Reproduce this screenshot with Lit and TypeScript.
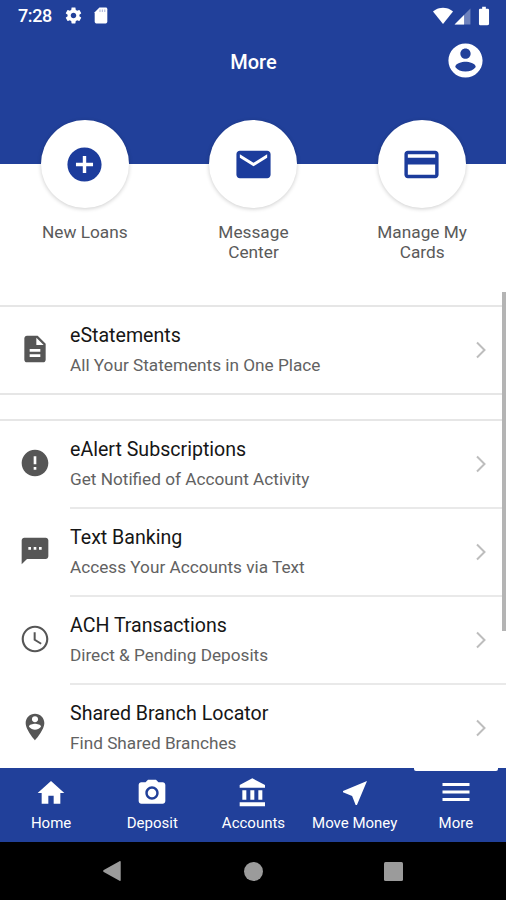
import { LitElement, html, css, svg } from "lit";
import { customElement, property } from "lit/decorators.js";

const ICONS: Record<string, unknown> = {
  gear: svg`<path d="M19.43 12.98c.04-.32.07-.64.07-.98s-.03-.66-.07-.98l2.11-1.65c.19-.15.24-.42.12-.64l-2-3.46c-.12-.22-.39-.3-.61-.22l-2.49 1c-.52-.4-1.08-.73-1.69-.98l-.38-2.65C14.46 2.18 14.25 2 14 2h-4c-.25 0-.46.18-.49.42l-.38 2.65c-.61.25-1.17.59-1.69.98l-2.49-1c-.23-.09-.49 0-.61.22l-2 3.46c-.13.22-.07.49.12.64l2.11 1.65c-.04.32-.07.65-.07.98s.03.66.07.98l-2.11 1.65c-.19.15-.24.42-.12.64l2 3.46c.12.22.39.3.61.22l2.49-1c.52.4 1.08.73 1.69.98l.38 2.65c.03.24.24.42.49.42h4c.25 0 .46-.18.49-.42l.38-2.65c.61-.25 1.17-.59 1.69-.98l2.49 1c.23.09.49 0 .61-.22l2-3.46c.12-.22.07-.49-.12-.64l-2.11-1.65zM12 15.5c-1.93 0-3.5-1.57-3.5-3.5s1.57-3.5 3.5-3.5 3.5 1.57 3.5 3.5-1.57 3.5-3.5 3.5z"/>`,
  sd: svg`<path d="M18 2h-8L4.02 8 4 20c0 1.1.9 2 2 2h12c1.100 0 2-.9 2-2V4c0-1.100-.9-2-2-2z"/><path d="M10 4.500h1.500v3H10zm3 0h1.500v3H13zm3 0h1.500v3H16z" opacity=".35" fill="#21409a"/>`,
  wifi: svg`<path d="M12 21.500L24 6.500C23.500 6 19 2 12 2S.5 6 0 6.500z"/>`,
  signal: svg`<path fill-opacity=".35" d="M2 22h20V2z"/><path d="M14 10L2 22h12z"/>`,
  battery: svg`<path d="M15.670 4H14V2h-4v2H8.330C7.100 4 6.500 4.600 6.500 5.330v15.330C6.500 21.400 7.100 22 8.330 22h7.330c1.240 0 1.840-.6 1.840-1.330V5.330C17.500 4.600 16.900 4 15.670 4z"/>`,
  account: svg`<path d="M12 2C6.480 2 2 6.480 2 12s4.480 10 10 10 10-4.480 10-10S17.520 2 12 2zm0 3c1.660 0 3 1.340 3 3s-1.340 3-3 3-3-1.340-3-3 1.340-3 3-3zm0 13.500c-2.500 0-4.710-1-6-2.720.03-1.990 4-2.980 6-2.980s5.970.99 6 2.980c-1.290 1.720-3.500 2.720-6 2.720z"/>`,
  add: svg`<path d="M12 2C6.480 2 2 6.480 2 12s4.480 10 10 10 10-4.480 10-10S17.520 2 12 2zm5 11h-4v4h-2v-4H7v-2h4V7h2v4h4v2z"/>`,
  mail: svg`<path d="M20 4H4c-1.100 0-1.990.9-1.990 2L2 18c0 1.100.9 2 2 2h16c1.100 0 2-.9 2-2V6c0-1.100-.9-2-2-2zm0 4l-8 5-8-5V6l8 5 8-5v2z"/>`,
  card: svg`<path d="M20 4H4c-1.110 0-1.990.89-1.990 2L2 18c0 1.110.89 2 2 2h16c1.110 0 2-.89 2-2V6c0-1.110-.89-2-2-2zm0 14H4v-6h16v6zm0-10H4V6h16v2z"/>`,
  doc: svg`<path d="M14 2H6c-1.100 0-1.990.9-1.990 2L4 20c0 1.100.89 2 1.990 2H18c1.100 0 2-.9 2-2V8l-6-6zm2 16H8v-2h8v2zm0-4H8v-2h8v2zm-3-5V3.500L18.500 9H13z"/>`,
  alert: svg`<path d="M12 2C6.480 2 2 6.480 2 12s4.480 10 10 10 10-4.480 10-10S17.520 2 12 2zm1 15h-2v-2h2v2zm0-4h-2V7h2v6z"/>`,
  sms: svg`<path d="M20 2H4c-1.100 0-1.990.9-1.990 2L2 22l4-4h14c1.100 0 2-.9 2-2V4c0-1.100-.9-2-2-2zM9 11H7V9h2v2zm4 0h-2V9h2v2zm4 0h-2V9h2v2z"/>`,
  clock: svg`<path d="M11.990 2C6.470 2 2 6.480 2 12s4.470 10 9.990 10C17.520 22 22 17.520 22 12S17.520 2 11.990 2zM12 20.400c-4.640 0-8.400-3.760-8.400-8.400S7.360 3.600 12 3.600s8.400 3.760 8.400 8.400-3.760 8.400-8.400 8.400zm.5-13.400H11v6l5.250 3.150.75-1.230-4.500-2.670z"/>`,
  pin: svg`<path d="M12 2C8.140 2 5 5.140 5 9c0 5.250 7 13 7 13s7-7.750 7-13c0-3.860-3.140-7-7-7zm0 2c1.380 0 2.300 1 2.300 2.200 0 1.210-.92 2.200-2.300 2.200s-2.300-.99-2.300-2.200C9.700 5 10.620 4 12 4zm0 10c-1.670 0-3.240-.75-4.500-2.150.02-1.620 2.870-2.250 4.500-2.250s4.480.63 4.500 2.250c-1.260 1.400-2.830 2.150-4.500 2.150z"/>`,
  chevron: svg`<path d="M8 4.500L15.500 12 8 19.500" fill="none" stroke="currentColor" stroke-width="2"/>`,
  home: svg`<path d="M10 20v-6h4v6h5v-8h3L12 3 2 12h3v8z"/>`,
  camera: svg`<circle cx="12" cy="12" r="3.200"/><path d="M9 2L7.170 4H4c-1.100 0-2 .9-2 2v12c0 1.100.9 2 2 2h16c1.100 0 2-.9 2-2V6c0-1.100-.9-2-2-2h-3.170L15 2H9zm3 15c-2.760 0-5-2.240-5-5s2.240-5 5-5 5 2.240 5 5-2.240 5-5 5z"/>`,
  bank: svg`<path d="M4 10v7h3v-7H4zm6 0v7h3v-7h-3zM2 22h19v-3H2v3zm14-12v7h3v-7h-3zm-4.500-9L2 6v2h19V6l-9.500-5z"/>`,
  send: svg`<path d="M21 3L3 10.530v.98l6.840 2.650L12.480 21h.98L21 3z"/>`,
  menu: svg`<path d="M3 18h18v-2H3v2zm0-5h18v-2H3v2zm0-7v2h18V6H3z"/>`,
  back: svg`<path d="M21.500 2v20c0 .8-.7 1-1.300.6L3 13c-.9-.5-.9-1.500 0-2L20.200 1.400c.6-.4 1.300-.2 1.300.6z"/>`,
};

@customElement("ui-icon")
class UiIcon extends LitElement {
  @property() name = "";
  static styles = css`
    :host { display: block; flex: none; width: 24px; height: 24px; }
    .glyph { display: block; width: 100%; height: 100%; fill: currentColor; }
  `;
  render() {
    return html`<svg class="glyph" viewBox="0 0 24 24">${ICONS[this.name]}</svg>`;
  }
}

type Row = { icon: string; title: string; sub: string };

const STATEMENTS: Row[] = [
  { icon: "doc", title: "eStatements", sub: "All Your Statements in One Place" },
];
const SERVICES: Row[] = [
  { icon: "alert", title: "eAlert Subscriptions", sub: "Get Notified of Account Activity" },
  { icon: "sms", title: "Text Banking", sub: "Access Your Accounts via Text" },
  { icon: "clock", title: "ACH Transactions", sub: "Direct & Pending Deposits" },
  { icon: "pin", title: "Shared Branch Locator", sub: "Find Shared Branches" },
];
const SHORTCUTS = [
  { icon: "add", label: "New Loans" },
  { icon: "mail", label: "Message Center" },
  { icon: "card", label: "Manage My Cards" },
];
const TABS = [
  { icon: "home", label: "Home" },
  { icon: "camera", label: "Deposit" },
  { icon: "bank", label: "Accounts" },
  { icon: "send", label: "Move Money" },
  { icon: "menu", label: "More" },
];

@customElement("app-root")
class AppRoot extends LitElement {
  static styles = css`
    :host {
      display: flex; flex-direction: column; position: relative;
      width: 506px; height: 900px; overflow: hidden;
      background: #fff; font-family: Roboto, "Liberation Sans", sans-serif;
    }
    .header { flex: none; height: 163.5px; background: #21409a; color: #fff; }
    .status { display: flex; align-items: center; height: 32px; padding: 0 11px 0 18px; }
    .time { font-size: 18px; font-weight: 500; width: 46px; line-height: 32px; letter-spacing: -0.4px; }
    .status .gear { width: 19px; height: 19px; margin-top: -1px; }
    .status .sd { width: 20px; height: 19px; margin: -1px 0 0 8px; }
    .spacer { flex: 1; }
    .status .wifi { width: 20px; height: 20px; margin-top: -1px; }
    .status .signal { width: 19px; height: 19px; }
    .status .battery { width: 22px; height: 22px; margin: -1px 0 0 1px; }
    .titlebar { display: grid; grid-template-columns: 60px 1fr 60px; align-items: center; height: 58px; }
    .title { grid-column: 2; text-align: center; font-size: 20px; font-weight: 500; line-height: 24px; padding: 2px 0 0 1px; }
    .titlebar .account { width: 41px; height: 41px; margin: -1px 0 0 -1px; }
    .shortcuts { flex: none; display: grid; grid-template-columns: repeat(3, 1fr); height: 185px; margin-top: -43.5px; padding-left: 0.5px; margin-right: -0.5px; }
    .shortcut { display: flex; flex-direction: column; align-items: center; }
    .disc {
      display: grid; place-items: center; width: 88px; height: 88px; border-radius: 50%;
      background: #fff; color: #1c3c9c; box-shadow: 0 1px 4px rgba(0, 0, 0, 0.2);
    }
    .disc ui-icon { width: 41px; height: 41px; margin-left: -0.5px; }
    .caption { width: 100px; margin-top: 14px; text-align: center; font-size: 17.25px; line-height: 20px; color: #5a5a5a; }
    .group { flex: none; border-top: 2px solid #e6e6e6; }
    .closed { border-bottom: 2px solid #e6e6e6; margin-bottom: 24px; }
    .row { display: flex; height: 88px; box-sizing: border-box; padding-left: 19px; color: #565656; align-items: center; }
    .closed .row { height: 86px; }
    .row > ui-icon { width: 32px; height: 32px; margin-top: -4px; }
    .closed .row > ui-icon { margin-top: -2px; }
    .body {
      flex: 1; display: flex; align-items: center; align-self: stretch; margin-left: 19px;
      padding-right: 13px; box-sizing: border-box; border-bottom: 2px solid #e9e9e9;
    }
    .row:last-child .body { border-bottom-color: transparent; }
    .closed .body { border-bottom: 0; }
    .text { flex: 1; }
    .name { font-size: 19.6px; line-height: 24px; color: #161616; margin-bottom: 7px; }
    .sub { font-size: 17.2px; line-height: 20px; color: #626262; margin-bottom: 1px; }
    .chevron { width: 24px; height: 24px; color: #bdbdbd; }
    .thumb { position: absolute; right: 0; top: 292px; width: 4px; height: 339px; background: #b4b4b4; }
    .tabs { position: absolute; left: 0; right: 0; top: 768px; height: 74px; display: grid; grid-template-columns: repeat(5, 1fr); background: #21409a; color: #fff; }
    .tab { display: flex; flex-direction: column; align-items: center; padding: 9px 0 0 1px; position: relative; }
    .tab ui-icon { width: 32px; height: 32px; }
    .tab .menu { width: 36px; height: 36px; margin: -3px 0 -1px; }
    .label { font-size: 15px; line-height: 18px; margin-top: 5px; white-space: nowrap; }
    .marker { position: absolute; top: 0; left: 9px; width: 84px; height: 3px; background: #fff; border-radius: 0 0 2px 2px; }
    .system { position: absolute; left: 0; right: 0; top: 842px; height: 58px; background: #000; color: #9b9b9b; display: flex; align-items: center; justify-content: space-between; padding: 0 103px 0 101px; box-sizing: border-box; }
    .system ui-icon { width: 22px; height: 22px; }
    .dot { width: 19px; height: 19px; border-radius: 50%; background: currentColor; }
    .square { width: 19px; height: 19px; border-radius: 1.500px; background: currentColor; }
  `;

  private row(r: Row) {
    return html`<div class="row">
      <ui-icon name=${r.icon}></ui-icon>
      <div class="body">
        <div class="text"><div class="name">${r.title}</div><div class="sub">${r.sub}</div></div>
        <ui-icon class="chevron" name="chevron"></ui-icon>
      </div>
    </div>`;
  }

  render() {
    return html`
      <div class="header">
        <div class="status">
          <span class="time">7:28</span>
          <ui-icon class="gear" name="gear"></ui-icon>
          <ui-icon class="sd" name="sd"></ui-icon>
          <span class="spacer"></span>
          <ui-icon class="wifi" name="wifi"></ui-icon>
          <ui-icon class="signal" name="signal"></ui-icon>
          <ui-icon class="battery" name="battery"></ui-icon>
        </div>
        <div class="titlebar">
          <div class="title">More</div>
          <ui-icon class="account" name="account"></ui-icon>
        </div>
      </div>
      <div class="shortcuts">
        ${SHORTCUTS.map((s) => html`<div class="shortcut">
          <div class="disc"><ui-icon name=${s.icon}></ui-icon></div>
          <div class="caption">${s.label}</div>
        </div>`)}
      </div>
      <div class="group closed">${STATEMENTS.map((r) => this.row(r))}</div>
      <div class="group">${SERVICES.map((r) => this.row(r))}</div>
      <div class="thumb"></div>
      <div class="tabs">
        ${TABS.map((t) => html`<div class="tab">
          ${t.label === "More" ? html`<div class="marker"></div>` : null}
          <ui-icon class=${t.icon} name=${t.icon}></ui-icon>
          <div class="label">${t.label}</div>
        </div>`)}
      </div>
      <div class="system">
        <ui-icon name="back"></ui-icon>
        <div class="dot"></div>
        <div class="square"></div>
      </div>
    `;
  }
}
